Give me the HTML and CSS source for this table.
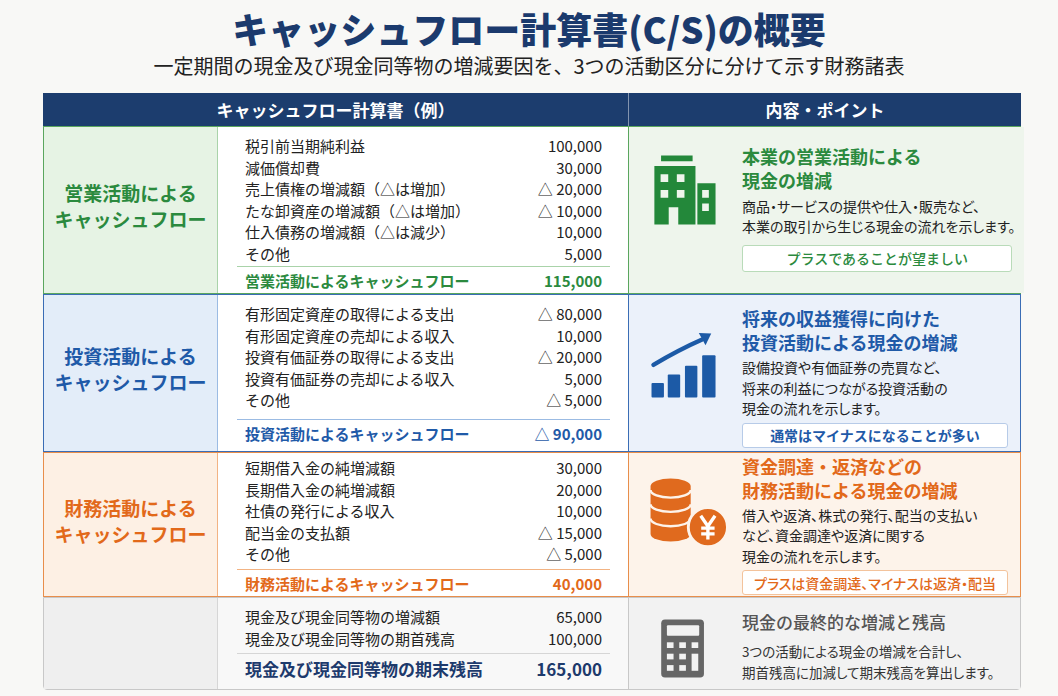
FILE: index.html
```html
<!DOCTYPE html>
<html lang="ja">
<head>
<meta charset="utf-8">
<title>キャッシュフロー計算書(C/S)の概要</title>
<link rel="stylesheet" href="styles.css">
</head>
<body>
<div class="page">
  <h1 class="title">キャッシュフロー計算書(C/S)の概要</h1>
  <p class="subtitle">一定期間の現金及び現金同等物の増減要因を、3つの活動区分に分けて示す財務諸表</p>

  <div class="table">
    <div class="thead">
      <div class="th th-left">キャッシュフロー計算書（例）</div>
      <div class="th th-right">内容・ポイント</div>
    </div>

    <section class="sec op">
      <div class="label">営業活動による<br>キャッシュフロー</div>
      <div class="items">
        <div class="list">
          <div class="row"><span>税引前当期純利益</span><span>100,000</span></div>
          <div class="row"><span>減価償却費</span><span>30,000</span></div>
          <div class="row"><span>売上債権の増減額（△は増加）</span><span>△ 20,000</span></div>
          <div class="row"><span>たな卸資産の増減額（△は増加）</span><span>△ 10,000</span></div>
          <div class="row"><span>仕入債務の増減額（△は減少）</span><span>10,000</span></div>
          <div class="row"><span>その他</span><span>5,000</span></div>
        </div>
        <div class="row sum"><span>営業活動によるキャッシュフロー</span><span>115,000</span></div>
      </div>
      <div class="point">
        <div class="icon">
          <svg width="86" height="86" viewBox="0 0 90 90">
            <path fill="#23883a" fill-rule="evenodd" d="M21 9h33v6H21z M14 20H57V81H39V63H29V81H14Z M20.5 28.5h8v8h-8z M37.5 28.5h8v8h-8z M20.5 45h8v8h-8z M37.5 45h8v8h-8z M59 38h19v43H59z M64 45h7v8h-7z M64 59h7v8h-7z"/>
          </svg>
        </div>
        <h3 class="pt-title">本業の営業活動による<br>現金の増減</h3>
        <p class="pt-desc">商品・サービスの提供や仕入・販売など、<br>本業の取引から生じる現金の流れを示します。</p>
        <div class="badge">プラスであることが望ましい</div>
      </div>
    </section>

    <section class="sec inv">
      <div class="label">投資活動による<br>キャッシュフロー</div>
      <div class="items">
        <div class="list">
          <div class="row"><span>有形固定資産の取得による支出</span><span>△ 80,000</span></div>
          <div class="row"><span>有形固定資産の売却による収入</span><span>10,000</span></div>
          <div class="row"><span>投資有価証券の取得による支出</span><span>△ 20,000</span></div>
          <div class="row"><span>投資有価証券の売却による収入</span><span>5,000</span></div>
          <div class="row"><span>その他</span><span>△ 5,000</span></div>
        </div>
        <div class="row sum"><span>投資活動によるキャッシュフロー</span><span>△ 90,000</span></div>
      </div>
      <div class="point">
        <div class="icon">
          <svg width="86" height="86" viewBox="0 0 90 90">
            <g fill="#1c5aa6">
              <rect x="11" y="66" width="13" height="15" rx="1"/>
              <rect x="28" y="57" width="13" height="24" rx="1"/>
              <rect x="46" y="48" width="13" height="33" rx="1"/>
              <rect x="64" y="37" width="14" height="44" rx="1"/>
              <polygon points="73.5,14 60.5,13.5 67.5,26.5"/>
            </g>
            <path d="M13 47 Q40 31 64 20.5" fill="none" stroke="#1c5aa6" stroke-width="4.5" stroke-linecap="round"/>
          </svg>
        </div>
        <h3 class="pt-title">将来の収益獲得に向けた<br>投資活動による現金の増減</h3>
        <p class="pt-desc">設備投資や有価証券の売買など、<br>将来の利益につながる投資活動の<br>現金の流れを示します。</p>
        <div class="badge">通常はマイナスになることが多い</div>
      </div>
    </section>

    <section class="sec fin">
      <div class="label">財務活動による<br>キャッシュフロー</div>
      <div class="items">
        <div class="list">
          <div class="row"><span>短期借入金の純増減額</span><span>30,000</span></div>
          <div class="row"><span>長期借入金の純増減額</span><span>20,000</span></div>
          <div class="row"><span>社債の発行による収入</span><span>10,000</span></div>
          <div class="row"><span>配当金の支払額</span><span>△ 15,000</span></div>
          <div class="row"><span>その他</span><span>△ 5,000</span></div>
        </div>
        <div class="row sum"><span>財務活動によるキャッシュフロー</span><span>40,000</span></div>
      </div>
      <div class="point">
        <div class="icon">
          <svg width="86" height="86" viewBox="0 0 90 90" overflow="visible">
            <path fill="#e06a1e" d="M10 20 A21 8 0 0 1 52 20 V70 A21 8 0 0 1 10 70 Z"/>
            <g fill="none" stroke="#fdf3ea" stroke-width="2.5">
              <path d="M10 24 A21 8 0 0 0 52 24"/>
              <path d="M10 39 A21 8 0 0 0 52 39"/>
              <path d="M10 54 A21 8 0 0 0 52 54"/>
            </g>
            <circle cx="70" cy="63" r="20.5" fill="#e06a1e" stroke="#fdf3ea" stroke-width="3"/>
            <path d="M62.5 51 L70 62 L77.5 51 M70 62 V76 M63 64 H77 M63 70 H77" fill="none" stroke="#fff" stroke-width="3.5"/>
          </svg>
        </div>
        <h3 class="pt-title">資金調達・返済などの<br>財務活動による現金の増減</h3>
        <p class="pt-desc">借入や返済、株式の発行、配当の支払い<br>など、資金調達や返済に関する<br>現金の流れを示します。</p>
        <div class="badge">プラスは資金調達、マイナスは返済・配当</div>
      </div>
    </section>

    <section class="sec tot">
      <div class="label"></div>
      <div class="items">
        <div class="list">
          <div class="row"><span>現金及び現金同等物の増減額</span><span>65,000</span></div>
          <div class="row"><span>現金及び現金同等物の期首残高</span><span>100,000</span></div>
        </div>
        <div class="row sum"><span>現金及び現金同等物の期末残高</span><span>165,000</span></div>
      </div>
      <div class="point">
        <div class="icon">
          <svg width="86" height="76" viewBox="0 5 90 80">
            <rect x="21" y="15" width="45" height="61" rx="4" fill="#666"/>
            <g fill="#f2f2f2">
              <rect x="27" y="21" width="34" height="11" rx="1"/>
              <rect x="27" y="39" width="7" height="6"/>
              <rect x="40" y="39" width="7" height="6"/>
              <rect x="53" y="39" width="7" height="6"/>
              <rect x="27" y="51" width="7" height="6"/>
              <rect x="40" y="51" width="7" height="6"/>
              <rect x="53" y="51" width="7" height="18"/>
              <rect x="27" y="63" width="7" height="6"/>
              <rect x="40" y="63" width="7" height="6"/>
            </g>
          </svg>
        </div>
        <h3 class="pt-title">現金の最終的な増減と残高</h3>
        <p class="pt-desc">3つの活動による現金の増減を合計し、<br>期首残高に加減して期末残高を算出します。</p>
      </div>
    </section>
  </div>
</div>
</body>
</html>
```

FILE: styles.css
```css
body {
  margin: 0;
  background: #f8f8f6;
  font-family: "Noto Sans CJK JP", "Noto Sans", sans-serif;
  color: #222;
}

.page {
  width: 1058px;
  height: 696px;
  overflow: hidden;
}

.title {
  margin: 6px 0 0;
  text-align: center;
  font-size: 36px;
  line-height: 44px;
  font-weight: 900;
  color: #1b3a6d;
}

.subtitle {
  margin: 2px 0 0;
  text-align: center;
  font-size: 20px;
  line-height: 28px;
  color: #222;
}

.table {
  width: 978px;
  margin: 13px 0 0 43px;
}

.thead {
  display: flex;
  height: 33px;
  background: #1c3d6e;
  color: #fff;
  font-size: 17px;
  font-weight: 700;
  line-height: 33px;
}

.th-left {
  width: 585px;
  text-align: center;
  border-right: 1px solid rgba(255, 255, 255, 0.45);
}

.th-right {
  flex: 1;
  text-align: center;
}

/* sections */
.sec {
  display: grid;
  grid-template-columns: 174px 410px 1fr;
  box-sizing: border-box;
  border: 1px solid var(--border);
}

.op {
  --main: #2b8a3e;
  --border: #5aa65e;
  --label: #e6f3e4;
  --panel: #eef5ec;
  --sep: #a9d3a9;
  --badge: #b9dbb9;
  height: 168px;
}

.inv {
  --main: #1f5aa8;
  --border: #3a6db5;
  --label: #e3edf9;
  --panel: #ebf1fa;
  --sep: #9bbbe3;
  --badge: #b7cbe8;
  height: 158px;
}

.fin {
  --main: #e2691a;
  --border: #e88e4b;
  --label: #fdf0e4;
  --panel: #fdf3ea;
  --sep: #f2b383;
  --badge: #f3c39c;
  height: 145px;
}

.tot {
  --main: #1d3a6c;
  --border: #c8c8c8;
  --label: #efefef;
  --panel: #f2f2f2;
  --sep: #d6d6d6;
  --badge: #d6d6d6;
  height: 93px;
  border-radius: 0 0 4px 4px;
}

.label {
  background: var(--label);
  border-right: 1px solid var(--sep);
  display: flex;
  align-items: center;
  justify-content: center;
  text-align: center;
  padding-bottom: 8px;
  color: var(--main);
  font-size: 19px;
  font-weight: 700;
  line-height: 26px;
}

.items {
  background: #fff;
  padding: 8px 18px 0 19px;
  display: flex;
  flex-direction: column;
}

.tot .items {
  background: #f8f8f8;
}

.row {
  display: flex;
  justify-content: space-between;
  padding: 0 8px;
  font-size: 15px;
  line-height: 21.5px;
  white-space: nowrap;
}

.sum {
  margin-top: auto;
  border-top: 1.5px solid var(--sep);
  padding-top: 2px;
  line-height: 24px;
  font-weight: 700;
  color: var(--main);
}

.inv .sum {
  padding-bottom: 5px;
}

.fin .items {
  padding-top: 4px;
}

.tot .sum {
  font-size: 17px;
  line-height: 26px;
  padding-top: 2px;
  padding-bottom: 7px;
}

/* point panel */
.point {
  background: var(--panel);
  border-left: 1.5px solid var(--border);
  display: grid;
  grid-template-columns: 86px 1fr;
  column-gap: 15px;
  align-content: center;
  padding: 0 9px 0 12px;
}

.icon {
  grid-row: 1 / 3;
  align-self: center;
  display: flex;
  justify-content: center;
}

.pt-title {
  grid-column: 2;
  margin: 0;
  font-size: 18px;
  line-height: 24px;
  font-weight: 700;
  color: var(--main);
  white-space: nowrap;
}

.pt-desc {
  grid-column: 2;
  margin: 3px 0 0;
  font-size: 14px;
  line-height: 20.5px;
  color: #222;
  white-space: nowrap;
  font-feature-settings: "palt";
}

.badge {
  grid-column: 2;
  margin: 4px 3px 0 0;
  height: 25px;
  box-sizing: border-box;
  border: 1px solid var(--badge);
  border-radius: 3px;
  background: #fff;
  display: flex;
  align-items: center;
  justify-content: center;
  font-size: 14px;
  font-weight: 700;
  color: var(--main);
  white-space: nowrap;
}

.op .point {
  padding-bottom: 5px;
}

.op .pt-desc {
  margin-top: 4px;
}

.op .badge {
  margin-top: 8px;
  height: 27px;
  font-weight: 500;
}

.inv .point {
  padding-top: 8px;
}

.fin .badge {
  font-weight: 500;
  font-size: 14px;
  font-feature-settings: "palt";
}

.tot .label {
  padding-bottom: 0;
}

.tot .point {
  padding-top: 9px;
}

.tot .pt-title {
  color: #555;
  font-weight: 500;
  font-size: 17px;
}

.tot .pt-desc {
  font-size: 13.5px;
  color: #333;
}
```
